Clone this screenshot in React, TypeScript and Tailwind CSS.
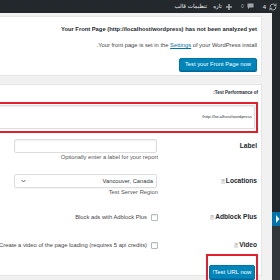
import { RefreshCw } from 'lucide-react';

function HelpMark() {
  return (
    <span className="inline-flex items-center justify-center w-[4px] h-[5px] bg-[#e2e2e2] text-[#8a8a8a] text-[4px] leading-none font-normal">
      ?
    </span>
  );
}

function Checkbox() {
  return <span className="block w-[7px] h-[7px] shrink-0 rounded-[1px] border border-[#b4b9be] bg-white shadow-[inset_0_1px_1px_rgba(0,0,0,0.08)]" />;
}

function AdminBar() {
  return (
    <div className="h-[13px] bg-[#23282d] flex items-center pr-[3px] text-[#eeeeee] text-[6px] leading-none">
      <div className="flex items-center gap-[3px]">
        <RefreshCw className="w-[8px] h-[8px] text-[#a0a5aa]" strokeWidth={3} />
        <span>4</span>
      </div>
      <div className="flex items-center gap-[3px] mr-[9px]">
        {/* comments bubble */}
        <svg width="7" height="7" viewBox="0 0 7 7" className="block">
          <path d="M0.5 0.5 H6.5 V4.5 H2.5 L1 6.3 V4.5 H0.5 Z" fill="#a0a5aa" />
        </svg>
        <span className="text-[#a0a5aa] text-[5px]">0</span>
      </div>
      <div className="flex items-center gap-[4px] mr-[9px]">
        <svg width="6" height="6" viewBox="0 0 6 6" className="block">
          <path d="M2.2 0 H3.8 V2.2 H6 V3.8 H3.8 V6 H2.2 V3.8 H0 V2.2 H2.2 Z" fill="#a0a5aa" />
        </svg>
        <span className="font-['DejaVu_Sans','Noto_Sans',sans-serif] text-[5.5px]">تازه</span>
      </div>
      <span className="mr-[6px] font-['DejaVu_Sans','Noto_Sans',sans-serif] text-[5.5px]">تنظیمات قالب</span>
    </div>
  );
}

function AdminMenu() {
  return (
    <div className="w-[8px] shrink-0 bg-[#23282d] flex flex-col">
      <div className="h-[199px]" />
      <div className="h-[14px] bg-[#0073aa] flex items-center">
        <svg width="4" height="14" viewBox="0 0 4 14" className="block ml-auto mr-0">
          <path d="M0 3 L3.5 7 L0 11 Z" fill="#f1f1f1" />
        </svg>
      </div>
      <div className="flex-1 bg-[#32373c]" />
    </div>
  );
}

function FieldRow({ label, help, children }: { label: string; help?: boolean; children: React.ReactNode }) {
  return (
    <div className="flex items-center">
      <div className="w-[99px] shrink-0 flex items-center gap-[1px] text-[6.6px] font-bold text-[#23282d] leading-none">
        <span>{label}</span>
        {help && <HelpMark />}
      </div>
      <div className="flex-1 flex items-center">{children}</div>
    </div>
  );
}

export default function App() {
  return (
    <div
      dir="rtl"
      className="w-[280px] h-[280px] overflow-hidden bg-[#f1f1f1] font-['Liberation_Sans',Arial,sans-serif] text-[#444]"
    >
      <AdminBar />
      <div className="flex h-[267px]">
        <AdminMenu />
        <div className="flex-1 min-w-0 pr-[10px]">
          {/* Front page notice */}
          <div className="w-[600px] mt-[3px] h-[60px] bg-white border border-[#e5e5e5] pr-[4px] pt-[8px]">
            <p className="h-[8px] leading-[8px] text-[5.8px] font-bold text-[#23282d] whitespace-nowrap">
              Your Front Page (http://localhost/wordpress) has not been analyzed yet
            </p>
            <p className="mt-[8px] h-[8px] leading-[8px] text-[5.8px] text-[#444] whitespace-nowrap">
              <span>Your front page is set in the </span>
              <a href="#" className="text-[#0073aa] underline">Settings</a>
              <span> of your WordPress install</span>
              <span>.</span>
            </p>
            <button className="mt-[7px] h-[13px] px-[5px] rounded-[2px] bg-[#0085ba] border border-[#0073aa] shadow-[0_1px_0_#006799] text-white text-[5.8px] leading-none">
              Test your Front Page now
            </button>
          </div>

          {/* Test form */}
          <div className="w-[600px] mt-[8px] h-[192px] bg-white border border-[#e5e5e5] pr-[4px] pt-[4px]">
            <div className="mr-[-1px]">
              <p className="h-[8px] leading-[8px] text-[4.5px] font-bold text-[#23282d]">Test Performance of:</p>
              <div className="mt-[5px] h-[31px] border-2 border-[#e2202b] pt-[1px] pr-[1px] pb-[2px]">
                <div className="h-[24px] border border-[#dddddd] rounded-[1px] shadow-[inset_0_1px_2px_rgba(0,0,0,0.07)] flex items-center pr-[2px] text-[4.3px] text-[#32373c]">
                  http://localhost/wordpress/
                </div>
              </div>
            </div>

            <div className="mt-[6px]">
              <FieldRow label="Label">
                <div className="mr-[1px] w-[143px] h-[14px] border border-[#dddddd] rounded-[2px] shadow-[inset_0_1px_2px_rgba(0,0,0,0.07)]" />
              </FieldRow>
              <p className="mr-[99px] mt-[1px] h-[7px] leading-[7px] text-[5.8px] text-[#555]">
                Optionally enter a label for your report
              </p>
            </div>

            <div className="mt-[13px]">
              <FieldRow label="Locations" help>
                <div className="mr-[1px] w-[143px] h-[14px] border border-[#dddddd] rounded-[2px] shadow-[0_1px_1px_rgba(0,0,0,0.04)] flex items-center justify-between pr-[3px] pl-[6px] text-[5.8px] text-[#32373c]">
                  <span>Vancouver, Canada</span>
                  <svg width="5" height="4" viewBox="0 0 5 4" className="block">
                    <path d="M0.5 1 L2.5 3 L4.5 1" stroke="#555" strokeWidth="0.9" fill="none" />
                  </svg>
                </div>
              </FieldRow>
              <p className="mr-[99px] mt-[1px] h-[7px] leading-[7px] text-[5.8px] text-[#555]">Test Server Region</p>
            </div>

            <div className="mt-[17px]">
              <FieldRow label="Adblock Plus" help>
                <div className="flex items-center gap-[4px] text-[5.8px] text-[#444] whitespace-nowrap">
                  <Checkbox />
                  <span>Block ads with Adblock Plus</span>
                </div>
              </FieldRow>
            </div>

            <div className="mt-[19px]">
              <FieldRow label="Video" help>
                <div className="flex items-center gap-[4px] text-[5.8px] text-[#444] whitespace-nowrap">
                  <Checkbox />
                  <span>Create a video of the page loading (requires 5 api credits)</span>
                </div>
              </FieldRow>
            </div>

            <div className="mt-[5px] flex">
              <div className="mr-[-1px] border-2 border-[#e2202b] p-[1px]">
                <button className="h-[14px] w-[46px] rounded-[2px] bg-[#0085ba] border border-[#0073aa] shadow-[0_1px_0_#006799] text-white text-[6px] leading-none">
                  Test URL now!
                </button>
              </div>
            </div>
          </div>
        </div>
      </div>
    </div>
  );
}
